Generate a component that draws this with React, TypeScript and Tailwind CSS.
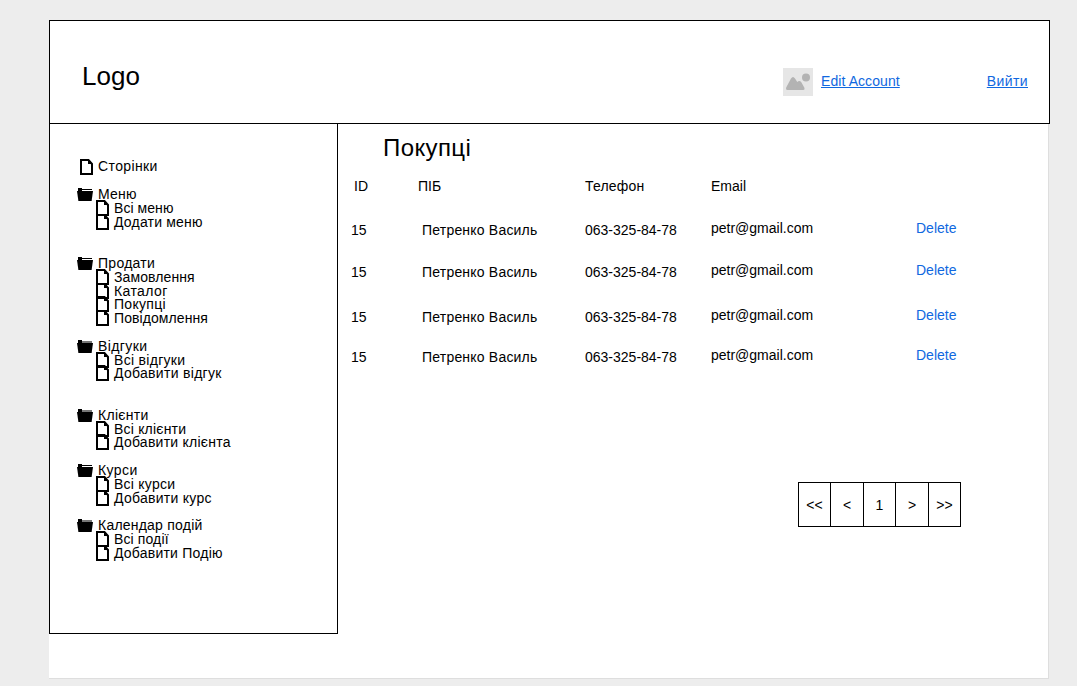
type Entry = { label: string; kind: 'page' | 'folder' | 'shadedFolder' | 'child'; tracking: string; tight?: boolean };

const groups: { gap: string; entries: Entry[] }[] = [
  { gap: 'mb-[14px]', entries: [{ label: 'Сторінки', kind: 'page', tracking: 'tracking-[0.38px]' }] },
  {
    gap: 'mb-[27px]',
    entries: [
      { label: 'Меню', kind: 'folder', tracking: 'tracking-[0.25px]' },
      { label: 'Всі меню', kind: 'child', tracking: 'tracking-[0.06px]' },
      { label: 'Додати меню', kind: 'child', tracking: 'tracking-[0.2px]' },
    ],
  },
  {
    gap: 'mb-[14px]',
    entries: [
      { label: 'Продати', kind: 'folder', tracking: 'tracking-[0.28px]' },
      { label: 'Замовлення', kind: 'child', tracking: 'tracking-[0.1px]' },
      { label: 'Каталог', kind: 'child', tracking: 'tracking-[0.4px]' },
      { label: 'Покупці', kind: 'child', tracking: 'tracking-[0.3px]', tight: true },
      { label: 'Повідомлення', kind: 'child', tracking: 'tracking-[0.08px]' },
    ],
  },
  {
    gap: 'mb-[28px]',
    entries: [
      { label: 'Відгуки', kind: 'shadedFolder', tracking: 'tracking-[0.4px]' },
      { label: 'Всі відгуки', kind: 'child', tracking: 'tracking-[0.3px]' },
      { label: 'Добавити відгук', kind: 'child', tracking: 'tracking-[0.3px]', tight: true },
    ],
  },
  {
    gap: 'mb-[14px]',
    entries: [
      { label: 'Клієнти', kind: 'shadedFolder', tracking: 'tracking-[0.3px]' },
      { label: 'Всі клієнти', kind: 'child', tracking: 'tracking-[0.2px]' },
      { label: 'Добавити клієнта', kind: 'child', tracking: 'tracking-[0.25px]', tight: true },
    ],
  },
  {
    gap: 'mb-[13px]',
    entries: [
      { label: 'Курси', kind: 'folder', tracking: 'tracking-[0.4px]' },
      { label: 'Всі курси', kind: 'child', tracking: 'tracking-[0.25px]' },
      { label: 'Добавити курс', kind: 'child', tracking: 'tracking-[0.28px]' },
    ],
  },
  {
    gap: '',
    entries: [
      { label: 'Календар подій', kind: 'shadedFolder', tracking: 'tracking-[0.22px]' },
      { label: 'Всі події', kind: 'child', tracking: 'tracking-[0.12px]' },
      { label: 'Добавити Подію', kind: 'child', tracking: 'tracking-[0.22px]' },
    ],
  },
];

const rows = ['h-[42px]', 'h-[45px]', 'h-[40px]', 'h-[40px]'];

function FileIcon({ className }: { className: string }) {
  return (
    <svg className={`h-4 w-[13px] shrink-0 ${className}`} viewBox="0 0 13 16" fill="none">
      <path d="M1 1H8.5L12 5V15H1Z" stroke="#000" strokeWidth="2" />
      <path d="M8 1V5H12Z" fill="#000" />
    </svg>
  );
}

function FolderIcon({ shaded }: { shaded: boolean }) {
  return (
    <svg className="mt-px h-[13px] w-4 shrink-0" viewBox="0 0 16 13">
      <path d="M1 0H5V1H6V3H1Z" fill="#000" />
      <path d={shaded ? 'M5 1H15V3H5Z' : 'M1 1H15V2H1Z'} fill={shaded ? '#777' : '#000'} />
      <path d={shaded ? 'M0 3H16L14.6 13H1.4Z' : 'M0 3H16L14.6 13H1.4Z'} fill="#000" />
      {!shaded && <path d="M5 2H15V3H5Z" fill="#fff" />}
    </svg>
  );
}

function TreeRow({ label, kind, tracking, tight }: Entry) {
  const indent = kind === 'child' ? 'pl-[19px]' : kind === 'page' ? 'pl-[3px]' : '';
  const isFolder = kind === 'folder' || kind === 'shadedFolder';
  return (
    <li className={`flex h-[14px] items-center gap-[5px] leading-[14px] ${indent} ${tight ? '-mt-px' : ''}`}>
      {isFolder ? (
        <FolderIcon shaded={kind === 'shadedFolder'} />
      ) : (
        <FileIcon className={kind === 'page' ? 'mt-0.5' : ''} />
      )}
      <span className={`whitespace-nowrap ${tracking}`}>{label}</span>
    </li>
  );
}

export default function App() {
  return (
    <div className="h-[686px] w-[1077px] overflow-hidden bg-[#ededed] pl-[49px] pt-5 font-['Liberation_Sans',Arial,sans-serif] text-[14px] leading-5 text-black">
      <div className="h-[658px] w-[1001px]">
        <header className="relative z-10 flex h-[104px] items-center border border-black bg-white pl-8 pr-[21px]">
          <h1 className="mt-2 text-[26px] leading-8">Logo</h1>
          <div className="ml-auto mt-[19px] flex items-center">
            <svg className="h-7 w-[30px]" viewBox="0 0 30 28">
              <path d="M0 0H30V28H0Z" fill="#e6e6e6" />
              <circle cx="23" cy="9.5" r="4" fill="#b3b3b3" />
              <path d="M3.2 19.5L8 10.5Q10 7.5 12 10.5L14.3 14Q16.5 12 18.5 14.500L21.500 20Q22 22 20.300 22H4.500Q2.500 22 3.200 19.500Z" fill="#b3b3b3" />
            </svg>
            <a href="#" className="-mt-0.5 ml-2 tracking-[0.08px] text-[#1068e0] underline">Edit Account</a>
            <a href="#" className="-mt-0.5 ml-[87px] tracking-[0.4px] text-[#1068e0] underline">Вийти</a>
          </div>
        </header>

        <div className="-mt-px flex h-[556px] w-[1000px] border-b border-r border-[#dedede] bg-white">
          <aside className="h-[511px] w-[289px] shrink-0 border border-black pl-[27px] pt-[35px]">
            {groups.map((group) => (
              <ul key={group.entries[0].label} className={group.gap}>
                {group.entries.map((entry) => (
                  <TreeRow key={entry.label} {...entry} />
                ))}
              </ul>
            ))}
          </aside>

          <main className="flex grow flex-col pl-[13px] pt-[9px]">
            <h2 className="pl-8 text-[24px] leading-8 tracking-[0.4px]">Покупці</h2>
            <div className="mt-3 grid h-[44px] grid-cols-[67px_167px_126px_205px_1fr]">
              <span className="pl-[3px]">ID</span>
              <span>ПІБ</span>
              <span className="tracking-[0.2px]">Телефон</span>
              <span>Email</span>
            </div>
            {rows.map((height, i) => (
              <div key={i} className={`grid grid-cols-[67px_167px_126px_205px_1fr] ${height}`}>
                <span>15</span>
                <span className="pl-1 tracking-[0.2px]">Петренко Василь</span>
                <span>063-325-84-78</span>
                <span className="-mt-0.5">petr@gmail.com</span>
                <a href="#" className="-mt-0.5 text-[#1068e0]">Delete</a>
              </div>
            ))}
            <nav className="ml-[447px] mt-[95px] flex h-[45px] w-[163px] border border-black">
              <button className="w-8 border-r border-black">&lt;&lt;</button>
              <button className="w-[33px] border-r border-black">&lt;</button>
              <button className="w-8 border-r border-black">1</button>
              <button className="w-[33px] border-r border-black">&gt;</button>
              <button className="grow">&gt;&gt;</button>
            </nav>
          </main>
        </div>
      </div>
    </div>
  );
}
